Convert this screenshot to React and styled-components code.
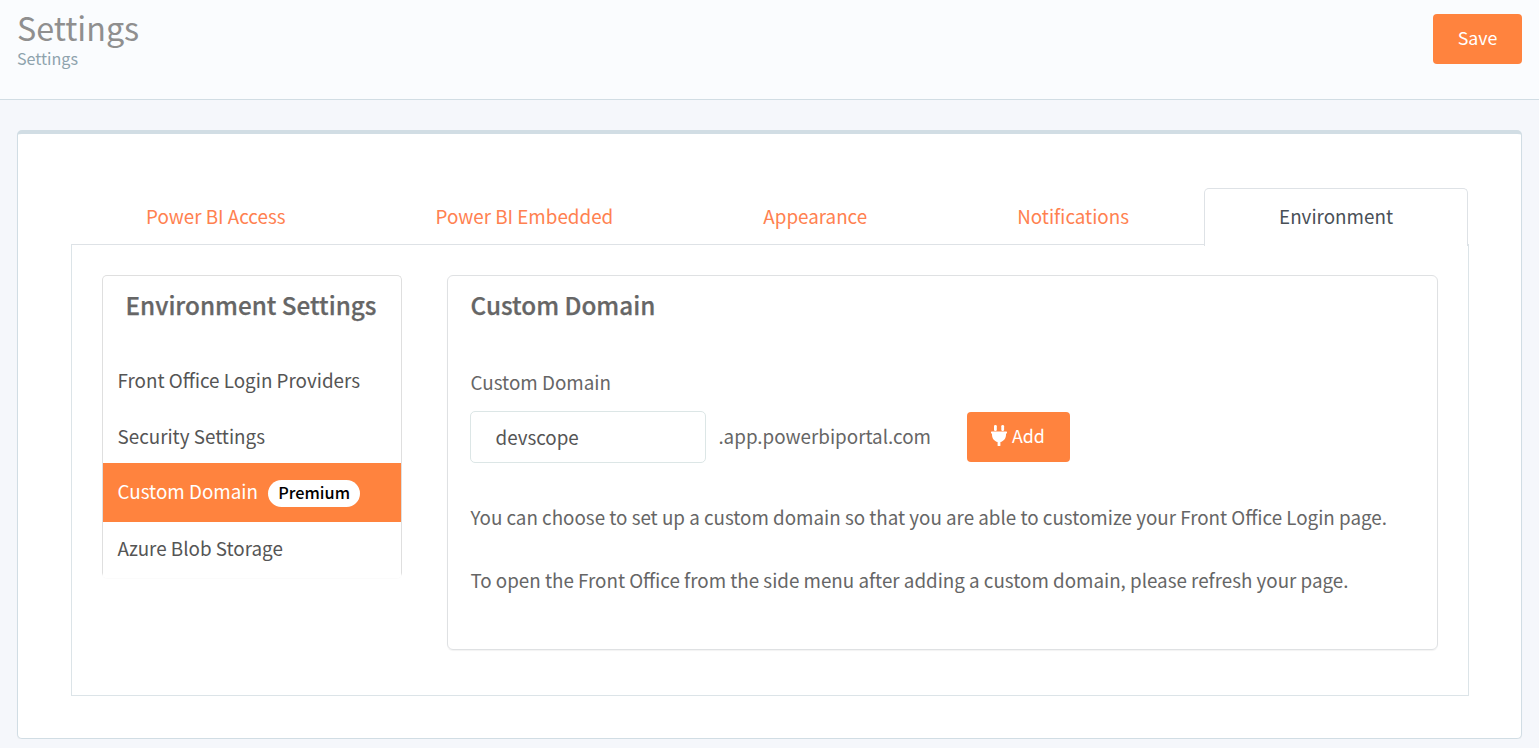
import React from "react";
import styled, { createGlobalStyle } from "styled-components";

const GlobalStyle = createGlobalStyle`
  *, *::before, *::after { box-sizing: border-box; }
  body {
    margin: 0;
    background: #f5f7fb;
    color: #666;
    font-family: "Noto Sans CJK SC", "Noto Sans", sans-serif;
    font-size: 18.82px;
    line-height: 28px;
  }
`;

const Header = styled.header`
  display: flex;
  justify-content: space-between;
  align-items: flex-start;
  height: 100px;
  padding: 14px 17px 0;
  background: #fafcfe;
  border-bottom: 1px solid #d1dde4;
`;

const Title = styled.h1`
  margin: -5px 0 3px;
  font-size: 32.25px;
  font-weight: 400;
  line-height: 36px;
  color: #8f8f8f;
`;

const Subtitle = styled.div`
  font-size: 16.1px;
  line-height: 20px;
  color: #8ea3ad;
`;

const Button = styled.button`
  display: inline-flex;
  align-items: center;
  justify-content: center;
  gap: 5px;
  width: ${(p) => p.$width}px;
  height: 50px;
  padding: 0 0 5px;
  border: 0;
  border-radius: 4px;
  background: #ff833e;
  color: #fff;
  font-family: inherit;
  font-size: 17.8px;
  line-height: 28px;
`;

const AddButton = styled(Button)`
  justify-content: flex-start;
  padding-left: 24px;
`;

const Plug = styled.svg`
  width: 16px;
  height: 21px;
  margin-top: 2px;
  fill: currentColor;
`;

const Panel = styled.main`
  height: 609px;
  margin: 30px 17px 0;
  padding: 54px 52px 0 53px;
  background: #fff;
  border: 1px solid #d1dde4;
  border-top-width: 4px;
  border-radius: 5px;
  box-shadow: 0 1px 1px rgba(0, 0, 0, 0.05);
`;

const Tabs = styled.nav`
  position: relative;
  display: flex;
  height: 58px;
  margin: 0 1px -2px 0;
`;

const Tab = styled.a`
  flex: 1 1 auto;
  padding-top: 13px;
  text-align: center;
  font-size: 18.82px;
  color: ${(p) => (p.$active ? "#495057" : "#ff8150")};
  border: 1px solid ${(p) => (p.$active ? "#dee2e6" : "transparent")};
  border-bottom: 0;
  border-radius: 5px 5px 0 0;
  background: ${(p) => (p.$active ? "#fff" : "transparent")};
`;

const TabPane = styled.section`
  display: flex;
  align-items: flex-start;
  gap: 45px;
  height: 452px;
  padding: 30px 30px 0;
  border: 1px solid #dce4e8;
  border-top-color: #dee2e6;
`;

const SideCard = styled.aside`
  width: 300px;
  height: 303px;
  border: 1px solid #dfdfdf;
  border-bottom: 5px solid #fff;
  border-radius: 5px;
  box-shadow: 0 1px 1px rgba(0, 0, 0, 0.02);
`;

const CardTitle = styled.h2`
  margin: 0;
  font-size: 24.25px;
  font-weight: 500;
  line-height: 36px;
  color: #666;
  -webkit-text-stroke: 0.25px #666;
`;

const SideTitle = styled(CardTitle)`
  padding: 11px 2px 28px 0;
  text-align: center;
`;

const NavItem = styled.div`
  display: flex;
  height: ${(p) => (p.$active ? 59 : 56)}px;
  padding: ${(p) => p.$top ?? 15}px 15px 0 14.5px;
  color: ${(p) => (p.$active ? "#fff" : "#555")};
  background: ${(p) => (p.$active ? "#ff833e" : "transparent")};
`;

const Badge = styled.span`
  width: 92px;
  height: 27px;
  margin: 3px 0 0 10px;
  padding-left: 10.3px;
  border-radius: 14px;
  background: #fff;
  color: #000;
  font-size: 16.3px;
  font-weight: 500;
  line-height: 25px;
`;

const DomainCard = styled.section`
  flex: 1;
  height: 375px;
  padding: 11px 22px 0;
  border: 1px solid #dfe1e3;
  border-radius: 6px;
  box-shadow: 0 1px 1px rgba(0, 0, 0, 0.05);
`;

const DomainTitle = styled(CardTitle)`
  padding-left: 0.5px;
`;

const Label = styled.label`
  display: block;
  margin: 45px 0 15px;
  padding-left: 0.5px;
`;

const DomainRow = styled.div`
  display: flex;
  align-items: center;
  height: 52px;
  margin-bottom: 40px;
`;

const DomainInput = styled.input`
  width: 236px;
  height: 52px;
  padding: 0 24px 2px 24.5px;
  border: 1px solid #dce6e6;
  border-radius: 5px;
  background: #fff;
  color: #555;
  font-family: inherit;
  font-size: 18.8px;
  outline: 0;
`;

const Suffix = styled.span`
  width: 249px;
  margin-left: 12px;
  padding-left: 0.4px;
  padding-bottom: 2px;
`;

const Note = styled.p`
  margin: 0 0 35px;
  padding-left: 0.4px;
  font-size: 18.8px;
  white-space: nowrap;
`;

const TABS = ["Power BI Access", "Power BI Embedded", "Appearance", "Notifications", "Environment"];

function PlugIcon() {
  return (
    <Plug viewBox="0 0 16 21" aria-hidden="true">
      <rect x="3" y="0" width="2.8" height="6" rx="1.3" />
      <rect x="10.3" y="0" width="2.8" height="6" rx="1.3" />
      <path d="M.6 6.4h14.8q.6 0 .6.6v1q0 .6-.6.6H15v1.2c0 3.6-2.3 6.5-5.6 7.3V20.4q0 .6-.6.6H7.2q-.6 0-.6-.6v-3.3C3.3 16.3 1 13.4 1 9.800V8.600H.6Q0 8.600 0 8V7q0-.6.6-.6z" />
    </Plug>
  );
}

export default function App() {
  return (
    <>
      <GlobalStyle />
      <Header>
        <div>
          <Title>Settings</Title>
          <Subtitle>Settings</Subtitle>
        </div>
        <Button $width={89}>Save</Button>
      </Header>
      <Panel>
        <Tabs>
          {TABS.map((name) => (
            <Tab key={name} $active={name === "Environment"}>{name}</Tab>
          ))}
        </Tabs>
        <TabPane>
          <SideCard>
            <SideTitle>Environment Settings</SideTitle>
            <NavItem>Front Office Login Providers</NavItem>
            <NavItem>Security Settings</NavItem>
            <NavItem $active $top={14}>
              Custom Domain<Badge>Premium</Badge>
            </NavItem>
            <NavItem $top={12}>Azure Blob Storage</NavItem>
          </SideCard>
          <DomainCard>
            <DomainTitle>Custom Domain</DomainTitle>
            <Label htmlFor="domain">Custom Domain</Label>
            <DomainRow>
              <DomainInput id="domain" defaultValue="devscope" />
              <Suffix>.app.powerbiportal.com</Suffix>
              <AddButton $width={103}>
                <PlugIcon />
                Add
              </AddButton>
            </DomainRow>
            <Note>
              You can choose to set up a custom domain so that you are able to customize your Front
              Office Login page.
            </Note>
            <Note>
              To open the Front Office from the side menu after adding a custom domain, please
              refresh your page.
            </Note>
          </DomainCard>
        </TabPane>
      </Panel>
    </>
  );
}
